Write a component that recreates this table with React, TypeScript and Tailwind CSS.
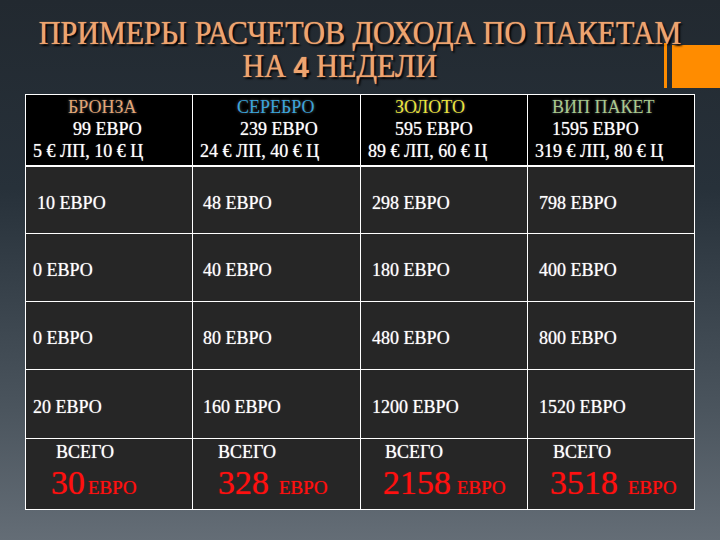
import React from "react";

const headers = [
  { name: "БРОНЗА", color: "text-[#e2a676]", price: "99 ЕВРО", sub: "5 € ЛП, 10 € Ц", p1: "pl-[42px]", p2: "pl-[47px]" },
  { name: "СЕРЕБРО", color: "text-[#3aa4dc]", price: "239 ЕВРО", sub: "24 € ЛП, 40 € Ц", p1: "pl-[44px]", p2: "pl-[47px]" },
  { name: "ЗОЛОТО", color: "text-[#ece43c]", price: "595 ЕВРО", sub: "89 € ЛП, 60 € Ц", p1: "pl-[34px]", p2: "pl-[34px]" },
  { name: "ВИП ПАКЕТ", color: "text-[#a9c98f]", price: "1595 ЕВРО", sub: "319 € ЛП, 80 € Ц", p1: "pl-[24px]", p2: "pl-[24px]" },
];

const rows = [
  ["10 ЕВРО", "48 ЕВРО", "298 ЕВРО", "798 ЕВРО"],
  ["0 ЕВРО", "40 ЕВРО", "180 ЕВРО", "400 ЕВРО"],
  ["0 ЕВРО", "80 ЕВРО", "480 ЕВРО", "800 ЕВРО"],
  ["20 ЕВРО", "160 ЕВРО", "1200 ЕВРО", "1520 ЕВРО"],
];

const rowH = ["h-[66px]", "h-[67px]", "h-[67px]", "h-[68px]"];
const colPad = ["pl-[7px]", "pl-[10px]", "pl-[11px]", "pl-[11px]"];

const totals = [
  { n: "30", p1: "pl-[30px]", p2: "pl-[25px]", gap: "ml-[3px]" },
  { n: "328", p1: "pl-[25px]", p2: "pl-[25px]", gap: "ml-[10px]" },
  { n: "2158", p1: "pl-[24px]", p2: "pl-[22px]", gap: "ml-[6px]" },
  { n: "3518", p1: "pl-[25px]", p2: "pl-[22px]", gap: "ml-[10px]" },
];

export default function App() {
  return (
    <div className="relative w-[720px] h-[540px] overflow-hidden font-['Liberation_Serif','Times_New_Roman',serif] bg-[linear-gradient(180deg,#222930_0%,#27313a_35%,#4a545d_75%,#646d76_100%)]">
      <div className="absolute left-[664px] top-[43px] w-[3px] h-[45px] bg-[#ff8c00]" />
      <div className="absolute left-[672px] top-[45px] w-[48px] h-[43px] bg-[#ff8c00]" />

      <div className="pt-[17px] text-[33px] leading-[33px] text-[#eea46f] [text-shadow:0_0_1px_#eea46f,2px_2px_2px_#000] text-center">
        <div className="scale-x-[0.913] whitespace-nowrap">ПРИМЕРЫ РАСЧЕТОВ ДОХОДА ПО ПАКЕТАМ</div>
        <div className="scale-x-[0.913] whitespace-nowrap pr-[44px]">
          НА <span className="font-bold text-[30px] font-['Liberation_Sans',Arial,sans-serif]">4</span> НЕДЕЛИ
        </div>
      </div>

      <div className="ml-[25px] mt-[11px] w-[670px] bg-white p-px">
        <div className="grid grid-cols-[166px_167px_166px_166px] gap-px mb-[2px]">
          {headers.map((h) => (
            <div key={h.name} className="h-[70px] bg-black pt-[1px] text-[18px] leading-[22px] text-white whitespace-nowrap [text-shadow:0_0_1px_rgba(255,255,255,0.7)]">
              <div className={`${h.p1} ${h.color} [text-shadow:0_0_3px_rgba(255,255,255,0.35)]`}>{h.name}</div>
              <div className={h.p2}>{h.price}</div>
              <div className="pl-[7px]">{h.sub}</div>
            </div>
          ))}
        </div>
        <div className="grid grid-cols-[166px_167px_166px_166px] gap-px">
          {rows.map((r, ri) =>
            r.map((c, ci) => (
              <div
                key={`${ri}-${ci}`}
                className={`${rowH[ri]} bg-[#262626] flex items-center text-[18px] text-white whitespace-nowrap [text-shadow:0_0_1px_rgba(255,255,255,0.7)] ${
                  ri === 0 && ci === 0 ? "pl-[11px]" : colPad[ci]
                }`}
              >
                <span className="pt-[6px]">{c}</span>
              </div>
            ))
          )}
          {totals.map((t) => (
            <div key={t.n} className="h-[70px] bg-[#262626] pt-[2px] whitespace-nowrap">
              <div className={`${t.p1} text-[18px] leading-[22px] text-white [text-shadow:0_0_1px_rgba(255,255,255,0.8)]`}>ВСЕГО</div>
              <div className={`${t.p2} leading-[40px] text-[#ff1010] [text-shadow:0_0_1px_rgba(255,16,16,0.8)]`}>
                <span className="text-[34px]">{t.n}</span>
                <span className={`${t.gap} text-[19px]`}>ЕВРО</span>
              </div>
            </div>
          ))}
        </div>
      </div>
    </div>
  );
}
